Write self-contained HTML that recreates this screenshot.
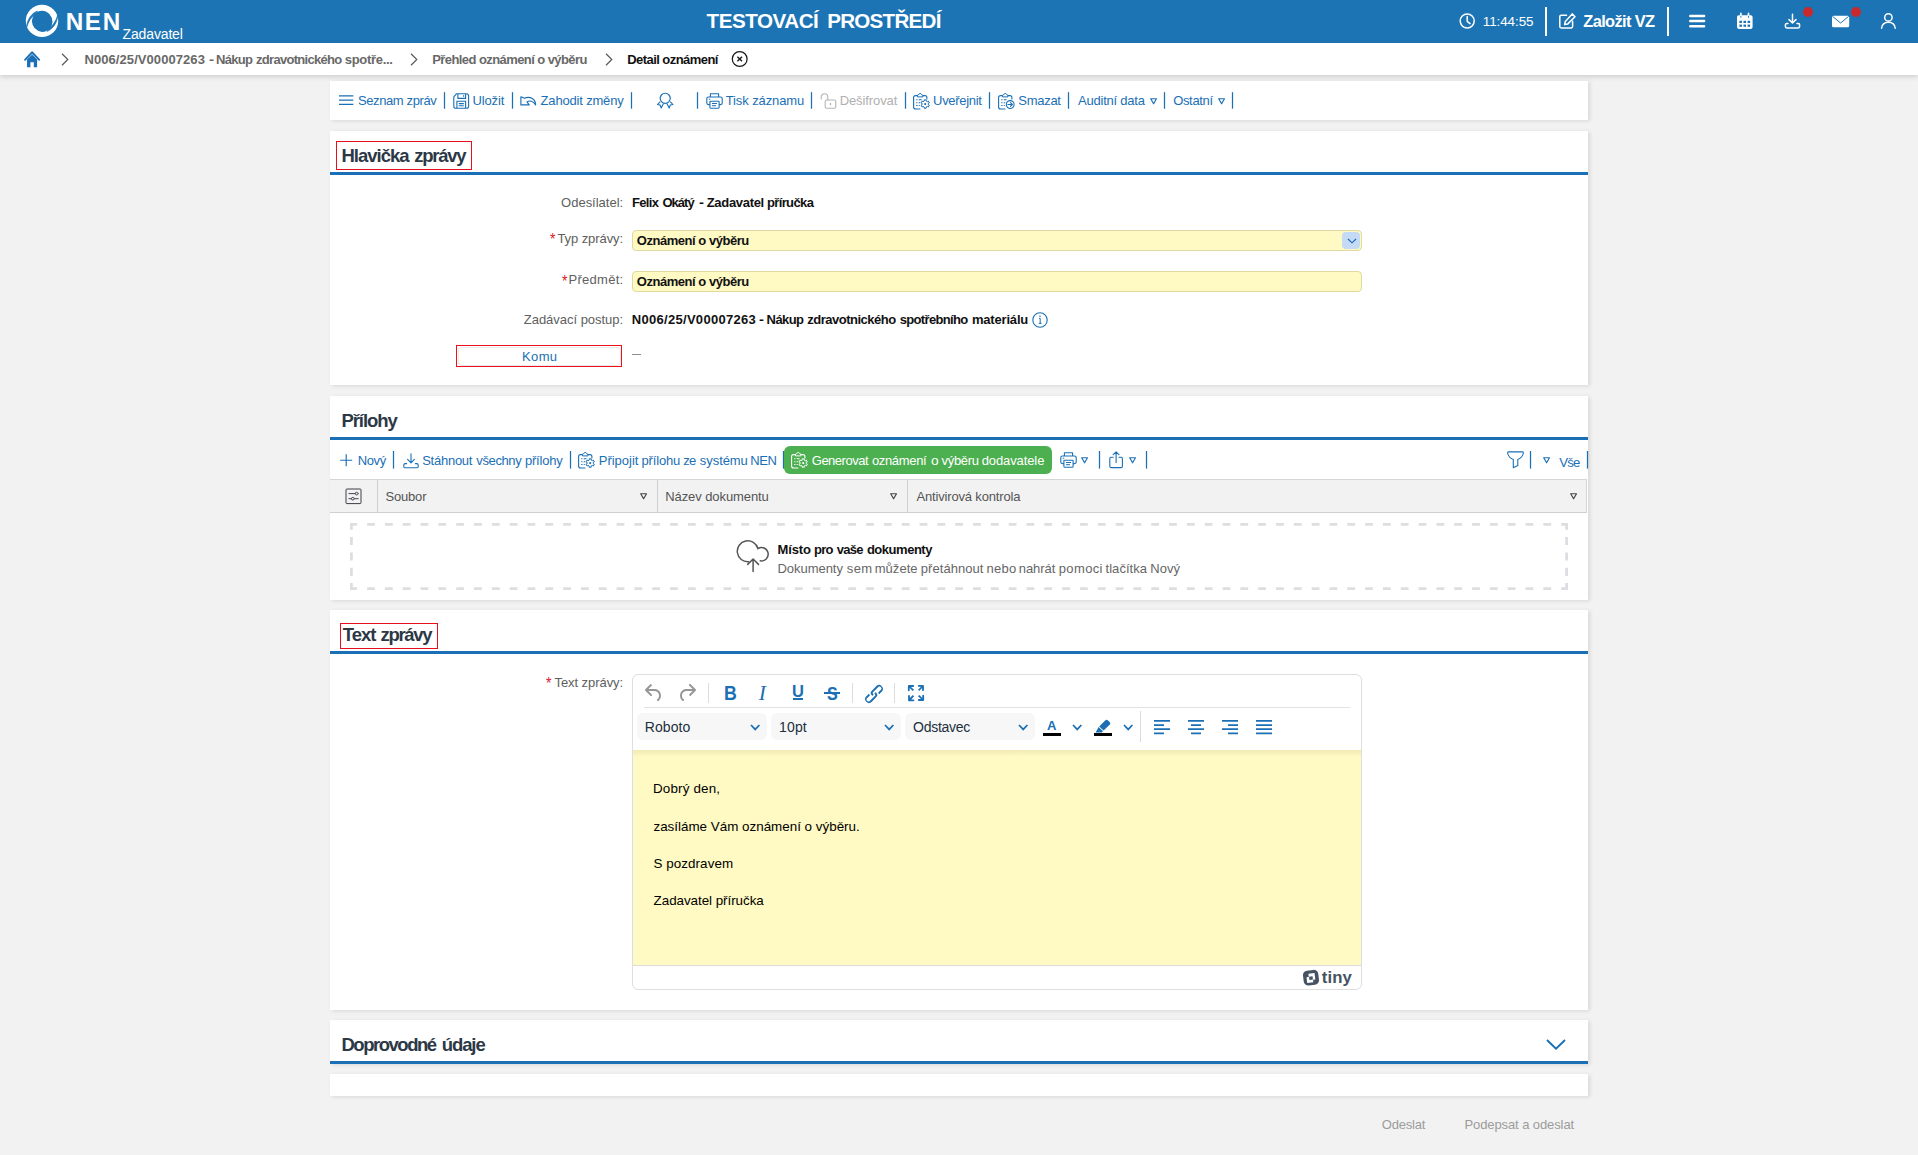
<!DOCTYPE html>
<html lang="cs">
<head>
<meta charset="utf-8">
<title>NEN - Detail oznámení</title>
<style>
*{box-sizing:border-box;margin:0;padding:0}
html,body{width:1918px;height:1155px;overflow:hidden}
body{background:#f2f2f2;font-family:"Liberation Sans",sans-serif;font-size:13px;color:#222;position:relative}
.abs{position:absolute}
.t{position:absolute;white-space:nowrap;line-height:1}
svg{position:absolute;overflow:visible}
/* header */
header,nav,section,footer{display:block}
#hdr{position:absolute;left:0;top:0;width:1918px;height:43px;background:#1d74b4}
#hdr .t{color:#fff}
#bc{position:absolute;left:0;top:43px;width:1918px;height:32px;background:#fff;box-shadow:0 2px 5px rgba(0,0,0,.15)}
.panel{position:absolute;left:330px;width:1258px;background:#fff;box-shadow:2px 1px 4px rgba(0,0,0,.11)}
.bline{position:absolute;left:0;width:1258px;height:3px;background:#1a6fb5}
.h{position:absolute;white-space:nowrap;font-weight:bold;font-size:18px;line-height:1;color:#2a3542;letter-spacing:-.45px}
.lnk{color:#1a6fb5}
.sep{position:absolute;width:1.5px;background:#1a6fb5}
.lbl{position:absolute;white-space:nowrap;line-height:1;color:#5a5a5a;font-size:13px;text-align:right}
.val{position:absolute;white-space:nowrap;line-height:1;color:#111;font-size:13px;font-weight:bold;letter-spacing:-.3px}
.inp{position:absolute;left:302px;width:730px;height:21px;background:#fff9c4;border:1px solid #e0d9a4;border-radius:4px}
.red{color:#d8232a}
</style>
</head>
<body>

<!-- ===== HEADER ===== -->
<header id="hdr">
  <svg style="left:0;top:0" width="200" height="43" viewBox="0 0 200 43">
<circle cx="42" cy="20.9" r="16.2" fill="#fff"/>
<ellipse cx="42.2" cy="21.3" rx="10.2" ry="10.6" fill="#1d74b4" transform="rotate(-20 42.2 21.3)"/>
<path d="M37.4 11 C31 13.6 27 20 26.6 27.4 C28.6 21 31.6 16.6 35.2 14.2Z" fill="#1d74b4" stroke="#1d74b4" stroke-width=".7"/>
<path d="M47 31.4 C53.4 28.8 57.4 22.4 57.8 15 C55.8 21.4 52.8 25.8 49.2 28.2Z" fill="#1d74b4" stroke="#1d74b4" stroke-width=".7"/>
</svg>
<span class="t" style="left:65.64px;top:9.90px;font-size:24.3px;letter-spacing:1.632px;color:#fff;font-weight:bold;">NEN</span>
<span class="t" style="left:122.58px;top:26.90px;font-size:14px;letter-spacing:-0.149px;color:#fff;">Zadavatel</span>
<span class="t" style="left:706.59px;top:11.40px;font-size:20.6px;letter-spacing:-0.467px;color:#fff;font-weight:bold;">TESTOVACÍ</span>
<span class="t" style="left:827.16px;top:11.40px;font-size:20.6px;letter-spacing:-0.738px;color:#fff;font-weight:bold;">PROSTŘEDÍ</span>
<svg style="left:1458px;top:12px" width="18" height="18" viewBox="0 0 18 18"><circle cx="9.2" cy="9" r="7" fill="none" stroke="#fff" stroke-width="1.5"/><path d="M9.2 4.6V9.3L12 11.6" fill="none" stroke="#fff" stroke-width="1.5" stroke-linecap="round" stroke-linejoin="round"/></svg>
<span class="t" style="left:1482.76px;top:15.20px;font-size:13.4px;letter-spacing:-0.049px;color:#fff;">11:44:55</span>
<div class="abs" style="left:1545px;top:7px;width:2px;height:29px;background:#fff"></div>
<svg style="left:1558px;top:12px" width="20" height="18" viewBox="0 0 20 18"><path d="M8.5 3.2H3.2C2.4 3.2 1.8 3.8 1.8 4.6V14.6C1.8 15.4 2.4 16 3.2 16H13.2C14 16 14.6 15.4 14.6 14.6V9.3" fill="none" stroke="#fff" stroke-width="1.5" stroke-linecap="round"/><path d="M14.2 1.9L17 4.7L9.8 11.9L6.6 12.6L7.3 9.4Z" fill="none" stroke="#fff" stroke-width="1.5" stroke-linejoin="round"/></svg>
<span class="t" style="left:1583.27px;top:13.00px;font-size:16.4px;letter-spacing:-0.630px;color:#fff;font-weight:bold;">Založit VZ</span>
<div class="abs" style="left:1667px;top:7px;width:2px;height:29px;background:#fff"></div>
<svg style="left:1688px;top:13px" width="19" height="16" viewBox="0 0 19 16"><path d="M2.3 3H16.1M2.3 8.1H16.1M2.3 13.2H16.1" stroke="#fff" stroke-width="2.5" stroke-linecap="round" fill="none"/></svg>
<svg style="left:1736px;top:12px" width="18" height="18" viewBox="0 0 18 18"><rect x="1" y="3.3" width="15.6" height="13.6" rx="1.8" fill="#fff"/><path d="M4.9 1.4V4.6M12.5 1.4V4.6" stroke="#fff" stroke-width="1.7" stroke-linecap="round"/><path d="M4.9 4.2V5.4M12.5 4.2V5.4" stroke="#1d74b4" stroke-width=".9" stroke-linecap="round"/><g fill="#1d74b4"><rect x="3.4" y="8.8" width="2.5" height="2.2"/><rect x="7.5" y="8.8" width="2.5" height="2.2"/><rect x="11.6" y="8.8" width="2.5" height="2.2"/><rect x="3.4" y="12.6" width="2.5" height="2.2"/><rect x="7.5" y="12.6" width="2.5" height="2.2"/><rect x="11.6" y="12.6" width="2.5" height="2.2"/></g></svg>
<svg style="left:1784px;top:13px" width="18" height="17" viewBox="0 0 18 17"><path d="M8.5 1.2V9.6M5 6.6L8.5 10L12 6.6" fill="none" stroke="#fff" stroke-width="1.5" stroke-linecap="round" stroke-linejoin="round"/><path d="M4 10.6H2.6C1.9 10.6 1.4 11.1 1.4 11.8V13.6C1.4 14.4 2 15 2.8 15H14.2C15 15 15.6 14.4 15.6 13.6V11.8C15.6 11.1 15.1 10.6 14.4 10.6H13" fill="none" stroke="#fff" stroke-width="1.5" stroke-linecap="round"/></svg>
<div class="abs" style="left:1803px;top:7px;width:10px;height:10px;border-radius:5px;background:#c9282d"></div>
<svg style="left:1831px;top:15px" width="20" height="14" viewBox="0 0 20 14"><rect x="1" y="0.7" width="17.2" height="11.6" rx="1.6" fill="#fff"/><path d="M1.6 1.4L9.6 8L17.6 1.4" fill="none" stroke="#1d74b4" stroke-width="1"/></svg>
<div class="abs" style="left:1851px;top:7px;width:10px;height:10px;border-radius:5px;background:#c9282d"></div>
<svg style="left:1880px;top:12px" width="17" height="18" viewBox="0 0 17 18"><circle cx="8.4" cy="5.4" r="3.7" fill="none" stroke="#fff" stroke-width="1.5"/><path d="M1.6 16.3C1.6 12.6 4.5 10.2 8.4 10.2C12.3 10.2 15.2 12.6 15.2 16.3" fill="none" stroke="#fff" stroke-width="1.5" stroke-linecap="round"/></svg>
</header>

<!-- ===== BREADCRUMB ===== -->
<nav id="bc" aria-label="Drobečková navigace">
  <svg style="left:24px;top:7.5px" width="16.2" height="16.8" viewBox="0 0 18 16" preserveAspectRatio="none"><path d="M1.2 8.3L9 1.3L16.8 8.3" fill="none" stroke="#1a6fb5" stroke-width="2" stroke-linecap="round" stroke-linejoin="round"/><path d="M3.4 8.2L9 3.3L14.6 8.2V15.4H10.9V10.6H7.1V15.4H3.4Z" fill="#1a6fb5"/></svg>
<svg style="left:61.3px;top:9.5px" width="8" height="13" viewBox="0 0 8 13"><path d="M1 0.8L6.8 6.5L1 12.2" fill="none" stroke="#5a5a5a" stroke-width="1.2"/></svg>
<span class="t" style="left:84.52px;top:10.00px;font-size:13px;letter-spacing:0.067px;color:#686868;font-weight:bold;">N006/25/V00007263</span>
<span class="t" style="left:208.74px;top:10.00px;font-size:13px;letter-spacing:0.000px;color:#686868;font-weight:bold;transform:scaleX(1.168);transform-origin:0 0;">-</span>
<span class="t" style="left:216.12px;top:10.00px;font-size:13px;letter-spacing:-0.705px;color:#686868;font-weight:bold;">Nákup</span>
<span class="t" style="left:256.08px;top:10.00px;font-size:13px;letter-spacing:-0.718px;color:#686868;font-weight:bold;">zdravotnického</span>
<span class="t" style="left:344.81px;top:10.00px;font-size:13px;letter-spacing:-0.312px;color:#686868;font-weight:bold;">spotře...</span>
<svg style="left:409.5px;top:9.5px" width="8" height="13" viewBox="0 0 8 13"><path d="M1 0.8L6.8 6.5L1 12.2" fill="none" stroke="#5a5a5a" stroke-width="1.2"/></svg>
<span class="t" style="left:432.22px;top:10.00px;font-size:13px;letter-spacing:-0.578px;color:#686868;font-weight:bold;">Přehled oznámení o výběru</span>
<svg style="left:604.5px;top:9.5px" width="8" height="13" viewBox="0 0 8 13"><path d="M1 0.8L6.8 6.5L1 12.2" fill="none" stroke="#5a5a5a" stroke-width="1.2"/></svg>
<span class="t" style="left:627.22px;top:10.00px;font-size:13px;letter-spacing:-0.557px;color:#111;font-weight:bold;">Detail oznámení</span>
<svg style="left:731px;top:7px" width="18" height="18" viewBox="0 0 18 18"><circle cx="8.7" cy="9" r="7.4" fill="none" stroke="#1a1a1a" stroke-width="1.25"/><path d="M6.4 6.7L11 11.3M11 6.7L6.4 11.3" stroke="#1a1a1a" stroke-width="1.4" fill="none"/></svg>
</nav>

<!-- ===== TOOLBAR ===== -->
<section class="panel" id="tb" style="top:81px;height:39px">
  <svg style="left:9px;top:14.3px" width="15" height="10" viewBox="0 0 15 10"><path d="M0 0.9H14.3M0 5.1H14.3M0 9.3H14.3" stroke="#1a6fb5" stroke-width="1.2" fill="none"/></svg>
<span class="t" style="left:27.88px;top:13.00px;font-size:13px;letter-spacing:-0.379px;color:#1a6fb5;">Seznam zpráv</span>
<svg style="left:112px;top:11px" width="5" height="18" viewBox="0 0 5 18"><path d="M2.5 0.2V16.7" stroke="#1a6fb5" stroke-width="1.25" fill="none"/></svg>
<svg style="left:123px;top:12px" width="17" height="16" viewBox="0 0 17 16"><path d="M3.6 0.7H13.4C14.6 0.7 15.6 1.7 15.6 2.9V13.2C15.6 14.4 14.6 15.3 13.4 15.3H2.9C1.7 15.3 0.8 14.4 0.8 13.2V3.8Z" fill="none" stroke="#1a6fb5" stroke-width="1.1" stroke-linejoin="round"/><path d="M4.9 0.9V5.4H12.6V0.9" fill="none" stroke="#1a6fb5" stroke-width="1.1"/><path d="M10.6 2.2V3.8" stroke="#1a6fb5" stroke-width="1.1"/><path d="M3.9 15.2V8.3H12.6V15.2M5.8 10.6H10.8M5.8 12.8H10.8" fill="none" stroke="#1a6fb5" stroke-width="1.1"/></svg>
<span class="t" style="left:142.49px;top:13.00px;font-size:13px;letter-spacing:-0.125px;color:#1a6fb5;">Uložit</span>
<svg style="left:180px;top:11px" width="5" height="18" viewBox="0 0 5 18"><path d="M2.5 0.2V16.7" stroke="#1a6fb5" stroke-width="1.25" fill="none"/></svg>
<svg style="left:190.4px;top:15.3px" width="18" height="10" viewBox="0 0 18 10"><path d="M0.9 0.8V8.9H9.2L7 5.9C9.6 4.2 13.4 5 15.6 8.9C15.6 3.4 10.4 -0.4 4.4 2.3Z" fill="none" stroke="#1a6fb5" stroke-width="1.15" stroke-linejoin="round"/></svg>
<span class="t" style="left:210.61px;top:13.00px;font-size:13px;letter-spacing:-0.181px;color:#1a6fb5;">Zahodit změny</span>
<svg style="left:299px;top:11px" width="5" height="18" viewBox="0 0 5 18"><path d="M2.5 0.2V16.7" stroke="#1a6fb5" stroke-width="1.25" fill="none"/></svg>
<svg style="left:327.4px;top:12.3px" width="17" height="16" viewBox="0 0 17 16"><circle cx="8.2" cy="5.3" r="5.05" fill="none" stroke="#1a6fb5" stroke-width="1.15"/><path d="M3.2 8.6L0.5 11.5L3.1 12L4.2 15.1L6.5 10.6M13.2 8.6L15.9 11.5L13.3 12L12.2 15.1L9.9 10.6" fill="none" stroke="#1a6fb5" stroke-width="1.1" stroke-linejoin="round"/></svg>
<svg style="left:365px;top:11px" width="5" height="18" viewBox="0 0 5 18"><path d="M2.5 0.2V16.7" stroke="#1a6fb5" stroke-width="1.25" fill="none"/></svg>
<svg style="left:375.8px;top:11.6px" width="18" height="16" viewBox="0 0 18 16"><path d="M4.4 4V0.8H12.6V4" fill="none" stroke="#1a6fb5" stroke-width="1.1" stroke-linejoin="round"/><rect x="0.8" y="4" width="15.4" height="7.6" rx="1.6" fill="none" stroke="#1a6fb5" stroke-width="1.1"/><rect x="3.9" y="8.2" width="9.2" height="7" rx=".6" fill="#fff" stroke="#1a6fb5" stroke-width="1.1"/><path d="M6 10.5H11M6 12.7H10" stroke="#1a6fb5" stroke-width="1"/><path d="M2.8 6.2H4.2" stroke="#1a6fb5" stroke-width="1"/></svg>
<span class="t" style="left:395.74px;top:13.00px;font-size:13px;letter-spacing:-0.108px;color:#1a6fb5;">Tisk záznamu</span>
<svg style="left:479px;top:11px" width="5" height="18" viewBox="0 0 5 18"><path d="M2.5 0.2V16.7" stroke="#1a6fb5" stroke-width="1.25" fill="none"/></svg>
<svg style="left:489.8px;top:12px" width="18" height="16" viewBox="0 0 18 16"><path d="M1.2 6V4.2C1.2 2.2 2.6 0.8 4.5 0.8C6.4 0.8 7.8 2.2 7.8 4.2V7" fill="none" stroke="#b5b5b5" stroke-width="1.1" stroke-linecap="round"/><rect x="5.2" y="7" width="10.6" height="8.2" rx="1.4" fill="none" stroke="#b5b5b5" stroke-width="1.1"/><path d="M10.5 10V12.2" stroke="#b5b5b5" stroke-width="1.3"/></svg>
<span class="t" style="left:509.66px;top:13.00px;font-size:13px;letter-spacing:-0.101px;color:#b0b0b0;">Dešifrovat</span>
<svg style="left:573px;top:11px" width="5" height="18" viewBox="0 0 5 18"><path d="M2.5 0.2V16.7" stroke="#1a6fb5" stroke-width="1.25" fill="none"/></svg>
<svg style="left:583px;top:11.8px" width="18" height="17" viewBox="0 0 18 17"><path d="M4.4 2.6H2.6C1.5 2.6 0.6 3.5 0.6 4.6V14C0.6 15.1 1.5 16 2.6 16H7M10 2.6H11.9C13 2.6 13.9 3.5 13.9 4.6V6" fill="none" stroke="#1a6fb5" stroke-width="1.1" stroke-linecap="round"/><path d="M4.5 3.9V2.6C4.5 2 5 1.6 5.6 1.6H5.9C6.1 0.8 6.6 0.4 7.2 0.4C7.8 0.4 8.3 0.8 8.5 1.6H8.8C9.4 1.6 9.9 2 9.9 2.6V3.9Z" fill="none" stroke="#1a6fb5" stroke-width="1" stroke-linejoin="round"/><path d="M3.2 6.7H4.5M3.2 9.7H4.5M3.2 12.5H4.5M5.7 6.7H8.6M5.7 9.7H7.2M5.7 12.5H6.8" stroke="#1a6fb5" stroke-width="1.15"/><path d="M11.16 6.88L13.24 6.88L13.14 7.99L14.38 8.71L15.29 8.06L16.33 9.86L15.32 10.33L15.32 11.77L16.33 12.24L15.29 14.04L14.38 13.39L13.14 14.11L13.24 15.22L11.16 15.22L11.26 14.11L10.02 13.39L9.11 14.04L8.07 12.24L9.08 11.77L9.08 10.33L8.07 9.86L9.11 8.06L10.02 8.71L11.26 7.99Z" fill="none" stroke="#1a6fb5" stroke-width="1" stroke-linejoin="round"/><circle cx="12.2" cy="11.05" r="1.1" fill="#1a6fb5"/></svg>
<span class="t" style="left:603.09px;top:13.00px;font-size:13px;letter-spacing:-0.302px;color:#1a6fb5;">Uveřejnit</span>
<svg style="left:657px;top:11px" width="5" height="18" viewBox="0 0 5 18"><path d="M2.5 0.2V16.7" stroke="#1a6fb5" stroke-width="1.25" fill="none"/></svg>
<svg style="left:668px;top:11.8px" width="18" height="17" viewBox="0 0 18 17"><path d="M4.4 2.6H2.6C1.5 2.6 0.6 3.5 0.6 4.6V14C0.6 15.1 1.5 16 2.6 16H7M10 2.6H11.9C13 2.6 13.9 3.5 13.9 4.6V6" fill="none" stroke="#1a6fb5" stroke-width="1.1" stroke-linecap="round"/><path d="M4.5 3.9V2.6C4.5 2 5 1.6 5.6 1.6H5.9C6.1 0.8 6.6 0.4 7.2 0.4C7.8 0.4 8.3 0.8 8.5 1.6H8.8C9.4 1.6 9.9 2 9.9 2.6V3.9Z" fill="none" stroke="#1a6fb5" stroke-width="1" stroke-linejoin="round"/><path d="M3.2 6.7H4.5M3.2 9.7H4.5M3.2 12.5H4.5M5.7 6.7H8.6M5.7 9.7H7.2M5.7 12.5H6.8" stroke="#1a6fb5" stroke-width="1.15"/><g transform="translate(12.2 11.5)"><circle r="3.9" fill="none" stroke="#1a6fb5" stroke-width="1.05"/><path d="M-2.3 0H2.1M0.2-1.9L2.2 0L0.2 1.9" fill="none" stroke="#1a6fb5" stroke-width="1.1" stroke-linecap="round" stroke-linejoin="round"/></g></svg>
<span class="t" style="left:688.28px;top:13.00px;font-size:13px;letter-spacing:-0.276px;color:#1a6fb5;">Smazat</span>
<svg style="left:736px;top:11px" width="5" height="18" viewBox="0 0 5 18"><path d="M2.5 0.2V16.7" stroke="#1a6fb5" stroke-width="1.25" fill="none"/></svg>
<span class="t" style="left:748.00px;top:13.00px;font-size:13px;letter-spacing:-0.221px;color:#1a6fb5;">Auditní data</span>
<svg style="left:819.6px;top:17px" width="8" height="8" viewBox="0 0 8 8"><path d="M0.7 0.7H6.5L3.6 5.8Z" fill="none" stroke="#1a6fb5" stroke-width="1.15" stroke-linejoin="round"/></svg>
<svg style="left:832px;top:11px" width="5" height="18" viewBox="0 0 5 18"><path d="M2.5 0.2V16.7" stroke="#1a6fb5" stroke-width="1.25" fill="none"/></svg>
<span class="t" style="left:843.18px;top:13.00px;font-size:13px;letter-spacing:-0.336px;color:#1a6fb5;">Ostatní</span>
<svg style="left:888px;top:17px" width="8" height="8" viewBox="0 0 8 8"><path d="M0.7 0.7H6.5L3.6 5.8Z" fill="none" stroke="#1a6fb5" stroke-width="1.15" stroke-linejoin="round"/></svg>
<svg style="left:900px;top:11px" width="5" height="18" viewBox="0 0 5 18"><path d="M2.5 0.2V16.7" stroke="#1a6fb5" stroke-width="1.25" fill="none"/></svg>
</section>

<!-- ===== PANEL 1 ===== -->
<section class="panel" id="p1" style="top:131px;height:254px">
  <div class="abs" style="left:6px;top:10px;width:136px;height:29px;border:1px solid #e6101c"></div>
<span class="t" style="left:11.39px;top:15.70px;font-size:18.5px;letter-spacing:-0.990px;color:#2c3846;font-weight:bold;">Hlavička</span>
<span class="t" style="left:84.36px;top:15.70px;font-size:18.5px;letter-spacing:-1.310px;color:#2c3846;font-weight:bold;">zprávy</span>
<div class="bline" style="top:41px"></div>
<span class="t" style="left:231.08px;top:65.00px;font-size:13px;letter-spacing:-0.008px;color:#606060;">Odesílatel:</span>
<span class="t" style="left:301.92px;top:65.00px;font-size:13px;letter-spacing:-0.666px;color:#111;font-weight:bold;">Felix</span>
<span class="t" style="left:332.38px;top:65.00px;font-size:13px;letter-spacing:-0.965px;color:#111;font-weight:bold;">Okátý</span>
<span class="t" style="left:368.66px;top:65.00px;font-size:13px;letter-spacing:0.000px;color:#111;font-weight:bold;transform:scaleX(1.140);transform-origin:0 0;">-</span>
<span class="t" style="left:376.74px;top:65.00px;font-size:13px;letter-spacing:-0.316px;color:#111;font-weight:bold;">Zadavatel</span>
<span class="t" style="left:436.92px;top:65.00px;font-size:13px;letter-spacing:-0.615px;color:#111;font-weight:bold;">příručka</span>
<span class="t" style="left:219.86px;top:101.30px;font-size:16px;letter-spacing:0.000px;color:#d8232a;transform:scaleX(0.878);transform-origin:0 0;">*</span>
<span class="t" style="left:227.44px;top:100.80px;font-size:13px;letter-spacing:-0.076px;color:#606060;">Typ zprávy:</span>
<div class="inp" style="top:99px"></div>
<div class="abs" style="left:1012px;top:101px;width:18px;height:17px;background:#c5daf4;border-radius:4px"></div>
<svg style="left:1016.6px;top:106.6px" width="10" height="7" viewBox="0 0 10 7"><path d="M1 1L5 4.8L9 1" fill="none" stroke="#1a64c0" stroke-width="1.15"/></svg>
<span class="t" style="left:306.78px;top:103.00px;font-size:13px;letter-spacing:-0.469px;color:#111;font-weight:bold;">Oznámení o výběru</span>
<span class="t" style="left:231.76px;top:142.50px;font-size:16px;letter-spacing:0.000px;color:#d8232a;transform:scaleX(0.878);transform-origin:0 0;">*</span>
<span class="t" style="left:238.56px;top:142.00px;font-size:13px;letter-spacing:0.263px;color:#606060;">Předmět:</span>
<div class="inp" style="top:140px"></div>
<span class="t" style="left:306.78px;top:144.00px;font-size:13px;letter-spacing:-0.469px;color:#111;font-weight:bold;">Oznámení o výběru</span>
<span class="t" style="left:193.81px;top:181.80px;font-size:13px;letter-spacing:-0.026px;color:#606060;">Zadávací postup:</span>
<span class="t" style="left:301.82px;top:181.80px;font-size:13px;letter-spacing:0.292px;color:#111;font-weight:bold;">N006/25/V00007263</span>
<span class="t" style="left:429.46px;top:181.80px;font-size:13px;letter-spacing:0.000px;color:#111;font-weight:bold;transform:scaleX(1.140);transform-origin:0 0;">-</span>
<span class="t" style="left:436.62px;top:181.80px;font-size:13px;letter-spacing:-0.580px;color:#111;font-weight:bold;">Nákup</span>
<span class="t" style="left:477.28px;top:181.80px;font-size:13px;letter-spacing:-0.495px;color:#111;font-weight:bold;">zdravotnického</span>
<span class="t" style="left:569.71px;top:181.80px;font-size:13px;letter-spacing:-0.651px;color:#111;font-weight:bold;">spotřebního</span>
<span class="t" style="left:641.92px;top:181.80px;font-size:13px;letter-spacing:-0.179px;color:#111;font-weight:bold;">materiálu</span>
<svg style="left:702px;top:180.5px" width="16" height="16" viewBox="0 0 16 16"><circle cx="8" cy="8" r="7.2" fill="none" stroke="#1a6fb5" stroke-width="1.1"/><path d="M7 6.4H8.2V11.2M6.8 11.4H9.6" fill="none" stroke="#1a6fb5" stroke-width="1"/><circle cx="8" cy="4.3" r=".8" fill="#1a6fb5"/></svg>
<div class="abs" style="left:126px;top:214px;width:166px;height:22px;border:1px solid #ee0f1c;background:#fff"></div><div class="abs" style="left:127.5px;top:215.5px;width:163px;height:19px;border:1px solid #e9e9e9;border-radius:4px"></div>
<span class="t" style="left:192.06px;top:219.00px;font-size:13px;letter-spacing:0.347px;color:#1a6fb5;">Komu</span>
<div class="abs" style="left:302px;top:223px;width:9px;height:1px;background:#8f8f8f"></div>
</section>

<!-- ===== PANEL 2 ===== -->
<section class="panel" id="p2" style="top:396px;height:204px">
  <span class="t" style="left:11.39px;top:15.70px;font-size:18.5px;letter-spacing:-1.045px;color:#2c3846;font-weight:bold;">Přílohy</span>
<div class="bline" style="top:41px"></div>
<svg style="left:9.8px;top:57.8px" width="13" height="13" viewBox="0 0 13 13"><path d="M6.2 0.2V12.2M0.2 6.2H12.2" stroke="#1a6fb5" stroke-width="1.15" fill="none"/></svg>
<span class="t" style="left:27.66px;top:57.60px;font-size:13px;letter-spacing:-0.359px;color:#1a6fb5;">Nový</span>
<svg style="left:61px;top:55px" width="5" height="19" viewBox="0 0 5 19"><path d="M2.5 0V17.6" stroke="#1a6fb5" stroke-width="1.25" fill="none"/></svg>
<svg style="left:72.8px;top:56.6px" width="17" height="16" viewBox="0 0 17 16"><path d="M8 0.8V9.4M4.6 6.4L8 9.8L11.4 6.4" fill="none" stroke="#1a6fb5" stroke-width="1.1" stroke-linecap="round" stroke-linejoin="round"/><path d="M3.6 10.6H2.2C1.4 10.6 0.8 11.2 0.8 12V13.4C0.8 14.2 1.4 14.8 2.2 14.8H13.8C14.6 14.8 15.2 14.2 15.2 13.4V12C15.2 11.2 14.6 10.6 13.8 10.6H12.4" fill="none" stroke="#1a6fb5" stroke-width="1.1" stroke-linecap="round"/></svg>
<span class="t" style="left:92.18px;top:57.60px;font-size:13px;letter-spacing:-0.250px;color:#1a6fb5;">Stáhnout</span>
<span class="t" style="left:146.30px;top:57.60px;font-size:13px;letter-spacing:-0.382px;color:#1a6fb5;">všechny</span>
<span class="t" style="left:194.92px;top:57.60px;font-size:13px;letter-spacing:-0.190px;color:#1a6fb5;">přílohy</span>
<svg style="left:238px;top:55px" width="5" height="19" viewBox="0 0 5 19"><path d="M2.5 0V17.6" stroke="#1a6fb5" stroke-width="1.25" fill="none"/></svg>
<svg style="left:248.2px;top:56px" width="18" height="17" viewBox="0 0 18 17"><path d="M4.4 2.6H2.6C1.5 2.6 0.6 3.5 0.6 4.6V14C0.6 15.1 1.5 16 2.6 16H7M10 2.6H11.9C13 2.6 13.9 3.5 13.9 4.6V6" fill="none" stroke="#1a6fb5" stroke-width="1.1" stroke-linecap="round"/><path d="M4.5 3.9V2.6C4.5 2 5 1.6 5.6 1.6H5.9C6.1 0.8 6.6 0.4 7.2 0.4C7.8 0.4 8.3 0.8 8.5 1.6H8.8C9.4 1.6 9.9 2 9.9 2.6V3.9Z" fill="none" stroke="#1a6fb5" stroke-width="1" stroke-linejoin="round"/><path d="M3.2 6.7H4.5M3.2 9.7H4.5M3.2 12.5H4.5M5.7 6.7H8.6M5.7 9.7H7.2M5.7 12.5H6.8" stroke="#1a6fb5" stroke-width="1.15"/><path d="M11.16 6.88L13.24 6.88L13.14 7.99L14.38 8.71L15.29 8.06L16.33 9.86L15.32 10.33L15.32 11.77L16.33 12.24L15.29 14.04L14.38 13.39L13.14 14.11L13.24 15.22L11.16 15.22L11.26 14.11L10.02 13.39L9.11 14.04L8.07 12.24L9.08 11.77L9.08 10.33L8.07 9.86L9.11 8.06L10.02 8.71L11.26 7.99Z" fill="none" stroke="#1a6fb5" stroke-width="1" stroke-linejoin="round"/><circle cx="12.2" cy="11.05" r="1.1" fill="#1a6fb5"/></svg>
<span class="t" style="left:268.76px;top:57.60px;font-size:13px;letter-spacing:-0.018px;color:#1a6fb5;">Připojit</span>
<span class="t" style="left:311.42px;top:57.60px;font-size:13px;letter-spacing:-0.135px;color:#1a6fb5;">přílohu</span>
<span class="t" style="left:353.18px;top:57.60px;font-size:13px;letter-spacing:-0.640px;color:#1a6fb5;">ze</span>
<span class="t" style="left:369.84px;top:57.60px;font-size:13px;letter-spacing:-0.063px;color:#1a6fb5;">systému</span>
<span class="t" style="left:420.36px;top:57.60px;font-size:13px;letter-spacing:-0.485px;color:#1a6fb5;">NEN</span>
<svg style="left:451px;top:55px" width="5" height="19" viewBox="0 0 5 19"><path d="M2.5 0V17.6" stroke="#1a6fb5" stroke-width="1.25" fill="none"/></svg>
<div class="abs" style="left:454px;top:50px;width:268px;height:28px;background:#4caf50;border-radius:6px"></div>
<svg style="left:461.4px;top:56.2px" width="18" height="17" viewBox="0 0 18 17"><path d="M4.4 2.6H2.6C1.5 2.6 0.6 3.5 0.6 4.6V14C0.6 15.1 1.5 16 2.6 16H7M10 2.6H11.9C13 2.6 13.9 3.5 13.9 4.6V6" fill="none" stroke="#fff" stroke-width="1.1" stroke-linecap="round"/><path d="M4.5 3.9V2.6C4.5 2 5 1.6 5.6 1.6H5.9C6.1 0.8 6.6 0.4 7.2 0.4C7.8 0.4 8.3 0.8 8.5 1.6H8.8C9.4 1.6 9.9 2 9.9 2.6V3.9Z" fill="none" stroke="#fff" stroke-width="1" stroke-linejoin="round"/><path d="M3.2 6.7H4.5M3.2 9.7H4.5M3.2 12.5H4.5M5.7 6.7H8.6M5.7 9.7H7.2M5.7 12.5H6.8" stroke="#fff" stroke-width="1.15"/><path d="M11.16 6.88L13.24 6.88L13.14 7.99L14.38 8.71L15.29 8.06L16.33 9.86L15.32 10.33L15.32 11.77L16.33 12.24L15.29 14.04L14.38 13.39L13.14 14.11L13.24 15.22L11.16 15.22L11.26 14.11L10.02 13.39L9.11 14.04L8.07 12.24L9.08 11.77L9.08 10.33L8.07 9.86L9.11 8.06L10.02 8.71L11.26 7.99Z" fill="none" stroke="#fff" stroke-width="1" stroke-linejoin="round"/><circle cx="12.2" cy="11.05" r="1.1" fill="#fff"/></svg>
<span class="t" style="left:481.75px;top:57.60px;font-size:13px;letter-spacing:-0.485px;color:#fff;">Generovat</span>
<span class="t" style="left:541.88px;top:57.60px;font-size:13px;letter-spacing:-0.328px;color:#fff;">oznámení</span>
<span class="t" style="left:600.85px;top:57.60px;font-size:13px;letter-spacing:0.000px;color:#fff;transform:scaleX(1.058);transform-origin:0 0;">o</span>
<span class="t" style="left:611.60px;top:57.60px;font-size:13px;letter-spacing:-0.332px;color:#fff;">výběru</span>
<span class="t" style="left:651.68px;top:57.60px;font-size:13px;letter-spacing:-0.102px;color:#fff;">dodavatele</span>
<svg style="left:729.8px;top:56px" width="18" height="16" viewBox="0 0 18 16"><path d="M4.4 4V0.8H12.6V4" fill="none" stroke="#1a6fb5" stroke-width="1.1" stroke-linejoin="round"/><rect x="0.8" y="4" width="15.4" height="7.6" rx="1.6" fill="none" stroke="#1a6fb5" stroke-width="1.1"/><rect x="3.9" y="8.2" width="9.2" height="7" rx=".6" fill="#fff" stroke="#1a6fb5" stroke-width="1.1"/><path d="M6 10.5H11M6 12.7H10" stroke="#1a6fb5" stroke-width="1"/><path d="M2.8 6.2H4.2" stroke="#1a6fb5" stroke-width="1"/></svg>
<svg style="left:750.6px;top:61px" width="8" height="8" viewBox="0 0 8 8"><path d="M0.7 0.7H6.5L3.6 5.8Z" fill="none" stroke="#1a6fb5" stroke-width="1.15" stroke-linejoin="round"/></svg>
<svg style="left:767px;top:55px" width="5" height="19" viewBox="0 0 5 19"><path d="M2.5 0V17.6" stroke="#1a6fb5" stroke-width="1.25" fill="none"/></svg>
<svg style="left:779.2px;top:54.8px" width="15" height="18" viewBox="0 0 15 18"><path d="M4.2 6.2H2.2C1.4 6.2 0.8 6.8 0.8 7.6V15.2C0.8 16 1.4 16.6 2.2 16.6H12C12.8 16.6 13.4 16 13.4 15.2V7.6C13.4 6.8 12.8 6.2 12 6.2H10" fill="none" stroke="#1a6fb5" stroke-width="1.1" stroke-linecap="round"/><path d="M7.1 11.4V1M4.2 3.6L7.1 0.8L10 3.6" fill="none" stroke="#1a6fb5" stroke-width="1.1" stroke-linecap="round" stroke-linejoin="round"/></svg>
<svg style="left:798.7px;top:61px" width="8" height="8" viewBox="0 0 8 8"><path d="M0.7 0.7H6.5L3.6 5.8Z" fill="none" stroke="#1a6fb5" stroke-width="1.15" stroke-linejoin="round"/></svg>
<svg style="left:814px;top:55px" width="5" height="19" viewBox="0 0 5 19"><path d="M2.5 0V17.6" stroke="#1a6fb5" stroke-width="1.25" fill="none"/></svg>
<svg style="left:1176.5px;top:55.3px" width="17" height="18" viewBox="0 0 17 18"><path d="M1.4 0.9H15.6C16.2 0.9 16.5 1.4 16.4 2C15.8 5 13.6 7.4 10.8 8.4V14.4L6.3 16.7V8.4C3.4 7.4 1.2 5 0.6 2C0.5 1.4 0.8 0.9 1.4 0.9Z" fill="none" stroke="#1a6fb5" stroke-width="1.1" stroke-linejoin="round"/></svg>
<svg style="left:1198px;top:55px" width="5" height="19" viewBox="0 0 5 19"><path d="M2.5 0V17.6" stroke="#1a6fb5" stroke-width="1.25" fill="none"/></svg>
<svg style="left:1212.6px;top:60.8px" width="8" height="8" viewBox="0 0 8 8"><path d="M0.7 0.7H6.5L3.6 5.8Z" fill="none" stroke="#1a6fb5" stroke-width="1.15" stroke-linejoin="round"/></svg>
<span class="t" style="left:1229.20px;top:59.70px;font-size:13.2px;letter-spacing:-0.734px;color:#1a6fb5;">Vše</span>
<svg style="left:1255px;top:55px" width="5" height="19" viewBox="0 0 5 19"><path d="M2.5 0V17.6" stroke="#1a6fb5" stroke-width="1.25" fill="none"/></svg>
<div class="abs" style="left:0;top:83px;width:1257px;height:34px;background:#f2f2f2;border-top:1px solid #d6d6d6;border-bottom:1px solid #cfcfcf;border-right:1px solid #d6d6d6"></div>
<div class="abs" style="left:47px;top:84px;width:1px;height:32px;background:#d0d0d0"></div>
<div class="abs" style="left:327px;top:84px;width:1px;height:32px;background:#d0d0d0"></div>
<div class="abs" style="left:577px;top:84px;width:1px;height:32px;background:#d0d0d0"></div>
<svg style="left:15.4px;top:91.7px" width="17" height="17" viewBox="0 0 17 17"><rect x="1" y="1" width="15" height="14.6" rx="0.9" fill="none" stroke="#3c3c46" stroke-width="1"/><path d="M3.6 5.6H10.2M13 5.6H13.6M3.6 10.7H6.4M9.2 10.7H13.6" stroke="#3c3c46" stroke-width=".95"/><circle cx="11.6" cy="5.6" r="1.35" fill="none" stroke="#3c3c46" stroke-width=".95"/><circle cx="7.8" cy="10.7" r="1.35" fill="none" stroke="#3c3c46" stroke-width=".95"/></svg>
<span class="t" style="left:55.48px;top:93.80px;font-size:13px;letter-spacing:-0.186px;color:#555;">Soubor</span>
<svg style="left:310.2px;top:97px" width="8" height="8" viewBox="0 0 8 8"><path d="M0.7 0.7H6.5L3.6 5.8Z" fill="none" stroke="#444" stroke-width="1.15" stroke-linejoin="round"/></svg>
<span class="t" style="left:335.26px;top:93.80px;font-size:13px;letter-spacing:-0.084px;color:#555;">Název dokumentu</span>
<svg style="left:560.2px;top:97px" width="8" height="8" viewBox="0 0 8 8"><path d="M0.7 0.7H6.5L3.6 5.8Z" fill="none" stroke="#444" stroke-width="1.15" stroke-linejoin="round"/></svg>
<span class="t" style="left:586.40px;top:93.80px;font-size:13px;letter-spacing:-0.160px;color:#555;">Antivirová kontrola</span>
<svg style="left:1239.8px;top:97px" width="8" height="8" viewBox="0 0 8 8"><path d="M0.7 0.7H6.5L3.6 5.8Z" fill="none" stroke="#444" stroke-width="1.15" stroke-linejoin="round"/></svg>
<svg style="left:20px;top:127px" width="1218" height="67" viewBox="0 0 1218 67"><g fill="none" stroke="#dddee1" stroke-width="2.8"><path d="M0 1.4H1218M0 65.6H1218" stroke-dasharray="7.8 10.022" stroke-dashoffset="0.72"/><path d="M1.4 0V67M1216.6 0V67" stroke-dasharray="6.7 7.4 7.9 7.5 8 7.3 8.1 7.1 7"/></g></svg>
<svg style="left:405px;top:143px" width="35" height="35" viewBox="0 0 35 35"><path d="M13.6 22.77A10.5 10.5 0 1 1 22.93 9.52A6.7 6.7 0 1 1 25.3 21.8" fill="none" stroke="#565656" stroke-width="1.5" stroke-linecap="round"/><path d="M18.1 32.6V20.1M12.7 25.4L18.1 20L23.5 25.4" fill="none" stroke="#565656" stroke-width="1.5" stroke-linecap="round" stroke-linejoin="round"/></svg>
<span class="t" style="left:447.52px;top:147.00px;font-size:13px;letter-spacing:-0.140px;color:#111;font-weight:bold;">Místo</span>
<span class="t" style="left:484.12px;top:147.00px;font-size:13px;letter-spacing:-0.780px;color:#111;font-weight:bold;">pro</span>
<span class="t" style="left:506.80px;top:147.00px;font-size:13px;letter-spacing:-0.760px;color:#111;font-weight:bold;">vaše</span>
<span class="t" style="left:536.88px;top:147.00px;font-size:13px;letter-spacing:-0.471px;color:#111;font-weight:bold;">dokumenty</span>
<span class="t" style="left:447.46px;top:165.80px;font-size:13px;letter-spacing:-0.039px;color:#666;">Dokumenty</span>
<span class="t" style="left:516.84px;top:165.80px;font-size:13px;letter-spacing:0.310px;color:#666;">sem</span>
<span class="t" style="left:544.72px;top:165.80px;font-size:13px;letter-spacing:0.044px;color:#666;">můžete</span>
<span class="t" style="left:590.72px;top:165.80px;font-size:13px;letter-spacing:0.065px;color:#666;">přetáhnout</span>
<span class="t" style="left:656.62px;top:165.80px;font-size:13px;letter-spacing:0.210px;color:#666;">nebo</span>
<span class="t" style="left:688.82px;top:165.80px;font-size:13px;letter-spacing:-0.082px;color:#666;">nahrát</span>
<span class="t" style="left:728.72px;top:165.80px;font-size:13px;letter-spacing:0.376px;color:#666;">pomoci</span>
<span class="t" style="left:775.57px;top:165.80px;font-size:13px;letter-spacing:0.028px;color:#666;">tlačítka</span>
<span class="t" style="left:820.36px;top:165.80px;font-size:13px;letter-spacing:-0.026px;color:#666;">Nový</span>
</section>

<!-- ===== PANEL 3 ===== -->
<section class="panel" id="p3" style="top:610px;height:400px">
  <div class="abs" style="left:10px;top:13px;width:98px;height:26px;border:1px solid #e6101c"></div>
<span class="t" style="left:12.81px;top:16.30px;font-size:18.5px;letter-spacing:-1.042px;color:#2c3846;font-weight:bold;">Text</span>
<span class="t" style="left:50.56px;top:16.30px;font-size:18.5px;letter-spacing:-1.330px;color:#2c3846;font-weight:bold;">zprávy</span>
<div class="bline" style="top:41px"></div>
<span class="t" style="left:216.06px;top:66.10px;font-size:16px;letter-spacing:0.000px;color:#d8232a;transform:scaleX(0.878);transform-origin:0 0;">*</span>
<span class="t" style="left:224.44px;top:66.10px;font-size:13px;letter-spacing:-0.059px;color:#606060;">Text zprávy:</span>
<div id="ed" class="abs" style="left:302px;top:64px;width:730px;height:316px;border:1px solid #dedede;border-radius:6px;background:#fff;overflow:hidden">
<div class="abs" style="left:0;top:75px;width:728px;height:215px;background:#fff9c4"></div>
<div class="abs" style="left:0;top:75px;width:728px;height:7px;background:linear-gradient(rgba(120,110,40,.11),rgba(120,110,40,0))"></div>
<div class="abs" style="left:0;top:290px;width:728px;height:1px;background:#dcdcdc"></div>
<div class="abs" style="left:11px;top:32px;width:706px;height:1px;background:#e2e2e2"></div>
<svg style="left:8.8px;top:6.2px" width="24" height="24" viewBox="0 0 24 24"><path d="M6.4 8H12c3.7 0 6.2 2 6.8 5.1.6 2.7-.4 5.6-2.3 6.8a1 1 0 0 1-1-1.8c1.1-.6 1.8-2.7 1.4-4.6-.5-2.1-2.1-3.5-4.9-3.5H6.4l3.3 3.3a1 1 0 1 1-1.4 1.4l-5-5a1 1 0 0 1 0-1.4l5-5a1 1 0 0 1 1.4 1.4L6.4 8Z" fill="#979797"/></svg>
<svg style="left:42.4px;top:6.2px" width="24" height="24" viewBox="0 0 24 24"><path d="M17.6 10H12c-2.8 0-4.4 1.4-4.9 3.5-.4 2 .3 4 1.4 4.6a1 1 0 1 1-1 1.8c-2-1.2-2.9-4.1-2.3-6.8.6-3 3-5.1 6.8-5.1h5.6l-3.3-3.3a1 1 0 1 1 1.4-1.4l5 5a1 1 0 0 1 0 1.4l-5 5a1 1 0 0 1-1.4-1.4l3.3-3.3Z" fill="#979797"/></svg>
<div class="abs" style="left:75.1px;top:8.2px;width:1px;height:19.4px;background:#dcdcdc"></div>
<span class="t" style="left:90.84px;top:7.90px;font-size:20.3px;letter-spacing:0.000px;color:#1a6fb5;font-weight:bold;transform:scaleX(0.874);transform-origin:0 0;">B</span>
<span class="t" style="left:125.76px;top:7.90px;font-size:21.4px;letter-spacing:0.000px;color:#1a6fb5;font-style:italic;font-family:'Liberation Serif',serif;">I</span>
<span class="t" style="left:159.01px;top:8.20px;font-size:16.2px;letter-spacing:0.000px;color:#1a6fb5;font-weight:bold;transform:scaleX(1.022);transform-origin:0 0;">U</span>
<div class="abs" style="left:160px;top:23.1px;width:10.2px;height:1.8px;background:#1a6fb5"></div>
<span class="t" style="left:193.68px;top:9.00px;font-size:19.2px;letter-spacing:0.000px;color:#1a6fb5;font-weight:bold;transform:scaleX(0.837);transform-origin:0 0;">S</span>
<div class="abs" style="left:191px;top:17px;width:16px;height:1.9px;background:#1a6fb5"></div>
<div class="abs" style="left:219.1px;top:8.2px;width:1px;height:19.4px;background:#dcdcdc"></div>
<svg style="left:229px;top:6.5px" width="24" height="24" viewBox="0 0 24 24"><path d="M6.2 12.3a1 1 0 0 1 1.4 1.4l-2 2a2 2 0 1 0 2.6 2.8l4.8-4.8a1 1 0 0 0 0-1.4 1 1 0 1 1 1.4-1.3 2.9 2.9 0 0 1 0 4L9.6 20a3.9 3.9 0 0 1-5.5-5.5l2-2Zm11.6-.6a1 1 0 0 1-1.4-1.4l2-2a2 2 0 1 0-2.6-2.8L11 10.3a1 1 0 0 0 0 1.4A1 1 0 1 1 9.6 13a2.9 2.9 0 0 1 0-4L14.4 4a3.9 3.9 0 0 1 5.5 5.5l-2 2Z" fill="#1a6fb5"/></svg>
<div class="abs" style="left:260.9px;top:8.2px;width:1px;height:19.4px;background:#dcdcdc"></div>
<svg style="left:270.9px;top:6.2px" width="24" height="24" viewBox="0 0 24 24"><path d="m15.3 10-1.2-1.3 2.9-3h-2.3a.9.9 0 1 1 0-1.8H19c.5 0 .9.4.9.9v4.4a.9.9 0 1 1-1.8 0V7l-2.9 3Zm0 4 3 3v-2.3a.9.9 0 1 1 1.8 0V19c0 .5-.4.9-.9.9h-4.4a.9.9 0 1 1 0-1.8H17l-3-2.9 1.3-1.2ZM10 15.4l-2.9 3h2.3a.9.9 0 1 1 0 1.8H5a.9.9 0 0 1-.9-.9v-4.4a.9.9 0 1 1 1.8 0V17l2.9-3 1.2 1.3ZM8.7 10l-3-3v2.3a.9.9 0 0 1-1.8 0V5c0-.5.4-.9.9-.9h4.4a.9.9 0 0 1 0 1.8H7l3 2.9-1.3 1.2Z" fill="#1a6fb5"/></svg>
<div class="abs" style="left:3.9px;top:37.7px;width:129.7px;height:27px;background:#f7f7f7;border-radius:6px"></div>
<span class="t" style="left:11.68px;top:45.00px;font-size:14px;letter-spacing:0.116px;color:#222f3e;">Roboto</span>
<svg style="left:117px;top:48.8px" width="11" height="8" viewBox="0 0 11 8"><path d="M1 1L5.2 5.4L9.4 1" fill="none" stroke="#1a6fb5" stroke-width="1.7"/></svg>
<div class="abs" style="left:138px;top:37.7px;width:130px;height:27px;background:#f7f7f7;border-radius:6px"></div>
<span class="t" style="left:146.12px;top:45.00px;font-size:14px;letter-spacing:0.134px;color:#222f3e;">10pt</span>
<svg style="left:251.3px;top:48.8px" width="11" height="8" viewBox="0 0 11 8"><path d="M1 1L5.2 5.4L9.4 1" fill="none" stroke="#1a6fb5" stroke-width="1.7"/></svg>
<div class="abs" style="left:272.3px;top:37.7px;width:129.3px;height:27px;background:#f7f7f7;border-radius:6px"></div>
<span class="t" style="left:280.04px;top:45.00px;font-size:14px;letter-spacing:-0.257px;color:#222f3e;">Odstavec</span>
<svg style="left:384.7px;top:48.8px" width="11" height="8" viewBox="0 0 11 8"><path d="M1 1L5.2 5.4L9.4 1" fill="none" stroke="#1a6fb5" stroke-width="1.7"/></svg>
<span class="t" style="left:414.24px;top:44.40px;font-size:13.7px;letter-spacing:0.000px;color:#1a6fb5;font-weight:bold;transform:scaleX(0.955);transform-origin:0 0;">A</span>
<div class="abs" style="left:409.9px;top:58px;width:18px;height:2.7px;background:#000"></div>
<svg style="left:439px;top:48.8px" width="11" height="8" viewBox="0 0 11 8"><path d="M1 1L5.2 5.4L9.4 1" fill="none" stroke="#1a6fb5" stroke-width="1.7"/></svg>
<svg style="left:461.6px;top:43.6px" width="17" height="14" viewBox="0 0 17 14"><path d="M10.2 1.4C11 0.6 12.2 0.6 13 1.4L14.6 3C15.4 3.8 15.4 5 14.6 5.8L8.6 11.6L4.2 7.4Z" fill="#1a6fb5"/><path d="M3.6 8L8 12.2L6.6 13.4H0.6Z" fill="#1a6fb5"/></svg>
<div class="abs" style="left:461px;top:58px;width:18px;height:2.7px;background:#000"></div>
<svg style="left:490px;top:48.8px" width="11" height="8" viewBox="0 0 11 8"><path d="M1 1L5.2 5.4L9.4 1" fill="none" stroke="#1a6fb5" stroke-width="1.7"/></svg>
<div class="abs" style="left:507.1px;top:36.2px;width:1px;height:30.7px;background:#dcdcdc"></div>
<svg style="left:521px;top:44.7px" width="17" height="15" viewBox="0 0 17 15"><path d="M0 0.9H16M0 5.05H10M0 9.2H16M0 13.35H10" stroke="#1a6fb5" stroke-width="1.7" fill="none"/></svg>
<svg style="left:555.1px;top:44.7px" width="17" height="15" viewBox="0 0 17 15"><path d="M0 0.9H16M3 5.05H13M0 9.2H16M3 13.35H13" stroke="#1a6fb5" stroke-width="1.7" fill="none"/></svg>
<svg style="left:589.1px;top:44.7px" width="17" height="15" viewBox="0 0 17 15"><path d="M0 0.9H16M6 5.05H16M0 9.2H16M6 13.35H16" stroke="#1a6fb5" stroke-width="1.7" fill="none"/></svg>
<svg style="left:623px;top:44.7px" width="17" height="15" viewBox="0 0 17 15"><path d="M0 0.9H16M0 5.05H16M0 9.2H16M0 13.35H16" stroke="#1a6fb5" stroke-width="1.7" fill="none"/></svg>
<span class="t" style="left:19.93px;top:107.00px;font-size:13.4px;letter-spacing:0.178px;color:#000;">Dobrý den,</span>
<span class="t" style="left:20.46px;top:145.00px;font-size:13.4px;letter-spacing:0.004px;color:#000;">zasíláme Vám oznámení o výběru.</span>
<span class="t" style="left:20.46px;top:182.00px;font-size:13.4px;letter-spacing:0.073px;color:#000;">S pozdravem</span>
<span class="t" style="left:20.60px;top:219.00px;font-size:13.4px;letter-spacing:-0.043px;color:#000;">Zadavatel příručka</span>
<svg style="left:669.9px;top:295px" width="16" height="16" viewBox="0 0 16 16"><g transform="rotate(-7 8 7.7)"><rect x="0.3" y="0.2" width="15.4" height="15" rx="4.6" fill="#465363"/><path d="M5.9 3.4H12.1V10H9.8V12.4H3.6V6.7H5.9Z" fill="#fff"/><rect x="6.2" y="6.5" width="3.5" height="3.2" fill="#465363"/></g></svg>
<span class="t" style="left:688.73px;top:294.70px;font-size:16.8px;letter-spacing:0.079px;color:#465363;font-weight:bold;">tiny</span>
</div>
</section>

<!-- ===== PANEL 4 ===== -->
<section class="panel" id="p4" style="top:1020px;height:44px">
  <span class="t" style="left:11.49px;top:16.20px;font-size:18.5px;letter-spacing:-1.483px;color:#2c3846;font-weight:bold;">Doprovodné</span>
<span class="t" style="left:111.79px;top:16.20px;font-size:18.5px;letter-spacing:-1.106px;color:#2c3846;font-weight:bold;">údaje</span>
<svg style="left:1216.2px;top:19.2px" width="21" height="11" viewBox="0 0 21 11"><path d="M1 1L10 9.6L19 1" fill="none" stroke="#1a6fb5" stroke-width="1.9"/></svg>
<div class="bline" style="top:41px"></div>
</section>

<!-- ===== PANEL 5 ===== -->
<section class="panel" id="p5" style="top:1074px;height:22px"></section>

<!-- ===== FOOTER ===== -->
<footer id="ft">
<span class="t" style="left:1381.78px;top:1118.00px;font-size:13px;letter-spacing:-0.202px;color:#9c9c9c;">Odeslat</span>
<span class="t" style="left:1464.46px;top:1118.00px;font-size:13px;letter-spacing:-0.094px;color:#9c9c9c;">Podepsat a odeslat</span>
</footer>

</body>
</html>
